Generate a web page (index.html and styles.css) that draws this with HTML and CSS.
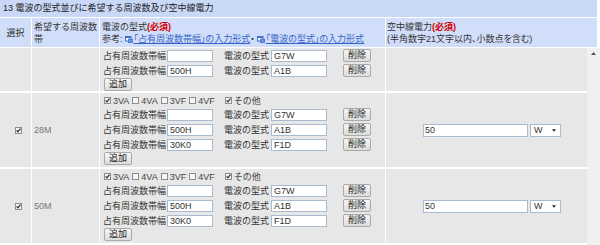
FILE: index.html
```html
<!DOCTYPE html>
<html lang="ja">
<head>
<meta charset="utf-8">
<link rel="stylesheet" href="styles.css">
</head>
<body>
<svg class="defs" width="0" height="0" aria-hidden="true">
  <symbol id="cbon" viewBox="0 0 7 7">
    <rect x="0.5" y="0.5" width="6" height="6" fill="#f6f6f6" stroke="#8d8d8d"/>
    <path d="M1.6 3.4 L2.9 4.9 L5.5 1.7" fill="none" stroke="#2a2a2a" stroke-width="1.2"/>
  </symbol>
  <symbol id="cboff" viewBox="0 0 7 7">
    <rect x="0.5" y="0.5" width="6" height="6" fill="#f6f6f6" stroke="#8d8d8d"/>
  </symbol>
  <symbol id="win" viewBox="0 0 8 7">
    <rect x="0.5" y="0.5" width="5.5" height="4.5" fill="#fff" stroke="#3f6fcf"/>
    <rect x="0.5" y="0.5" width="5.5" height="1.5" fill="#3f6fcf"/>
    <rect x="3.5" y="3" width="4" height="3.5" fill="#6b93df" stroke="#3f6fcf" stroke-width="0.8"/>
  </symbol>
</svg>
<div class="page">
  <div class="title">13 電波の型式並びに希望する周波数及び空中線電力</div>

  <div class="grid hdr">
    <div class="cell c1">選択</div>
    <div class="cell c2">希望する周波数帯</div>
    <div class="cell c3">
      <div>電波の型式<span class="req">(必須)</span></div>
      <div class="refs">参考:<a class="lnk"><svg class="wic"><use href="#win"/></svg>「占有周波数帯幅」の入力形式</a>・<a class="lnk"><svg class="wic"><use href="#win"/></svg>「電波の型式」の入力形式</a></div>
    </div>
    <div class="cell c4">
      <div>空中線電力<span class="req">(必須)</span></div>
      <div class="note">(半角数字21文字以内、小数点を含む)</div>
    </div>
  </div>

  <div class="body">
    <div class="grid rows">
      <!-- row 1 -->
      <div class="cell d1"></div>
      <div class="cell d2"></div>
      <div class="cell d3 first">
        <div class="pair"><span class="lbl">占有周波数帯幅</span><input class="inp w1" type="text" value=""><span class="lbl lbl2">電波の型式</span><input class="inp w2" type="text" value="G7W"><button class="btn del">削除</button></div>
        <div class="pair"><span class="lbl">占有周波数帯幅</span><input class="inp w1" type="text" value="500H"><span class="lbl lbl2">電波の型式</span><input class="inp w2" type="text" value="A1B"><button class="btn del">削除</button></div>
        <div class="addl"><button class="btn">追加</button></div>
      </div>
      <div class="cell d4"></div>

      <!-- row 2 -->
      <div class="cell d1"><svg class="cb"><use href="#cbon"/></svg></div>
      <div class="cell d2">28M</div>
      <div class="cell d3">
        <div class="chks">
          <span class="ck"><svg class="cb"><use href="#cbon"/></svg>3VA</span>
          <span class="ck"><svg class="cb"><use href="#cboff"/></svg>4VA</span>
          <span class="ck"><svg class="cb"><use href="#cboff"/></svg>3VF</span>
          <span class="ck"><svg class="cb"><use href="#cboff"/></svg>4VF</span>
          <span class="ck other"><svg class="cb"><use href="#cbon"/></svg>その他</span>
        </div>
        <div class="pair"><span class="lbl">占有周波数帯幅</span><input class="inp w1" type="text" value=""><span class="lbl lbl2">電波の型式</span><input class="inp w2" type="text" value="G7W"><button class="btn del">削除</button></div>
        <div class="pair"><span class="lbl">占有周波数帯幅</span><input class="inp w1" type="text" value="500H"><span class="lbl lbl2">電波の型式</span><input class="inp w2" type="text" value="A1B"><button class="btn del">削除</button></div>
        <div class="pair"><span class="lbl">占有周波数帯幅</span><input class="inp w1" type="text" value="30K0"><span class="lbl lbl2">電波の型式</span><input class="inp w2" type="text" value="F1D"><button class="btn del">削除</button></div>
        <div class="addl"><button class="btn">追加</button></div>
      </div>
      <div class="cell d4">
        <input class="inp pw" type="text" value="50"><span class="sel">W<svg class="arr" viewBox="0 0 5 3"><path d="M0 0H5L2.5 3Z" fill="#222"/></svg></span>
      </div>

      <!-- row 3 -->
      <div class="cell d1"><svg class="cb"><use href="#cbon"/></svg></div>
      <div class="cell d2">50M</div>
      <div class="cell d3">
        <div class="chks">
          <span class="ck"><svg class="cb"><use href="#cbon"/></svg>3VA</span>
          <span class="ck"><svg class="cb"><use href="#cboff"/></svg>4VA</span>
          <span class="ck"><svg class="cb"><use href="#cboff"/></svg>3VF</span>
          <span class="ck"><svg class="cb"><use href="#cboff"/></svg>4VF</span>
          <span class="ck other"><svg class="cb"><use href="#cbon"/></svg>その他</span>
        </div>
        <div class="pair"><span class="lbl">占有周波数帯幅</span><input class="inp w1" type="text" value=""><span class="lbl lbl2">電波の型式</span><input class="inp w2" type="text" value="G7W"><button class="btn del">削除</button></div>
        <div class="pair"><span class="lbl">占有周波数帯幅</span><input class="inp w1" type="text" value="500H"><span class="lbl lbl2">電波の型式</span><input class="inp w2" type="text" value="A1B"><button class="btn del">削除</button></div>
        <div class="pair"><span class="lbl">占有周波数帯幅</span><input class="inp w1" type="text" value="30K0"><span class="lbl lbl2">電波の型式</span><input class="inp w2" type="text" value="F1D"><button class="btn del">削除</button></div>
        <div class="addl"><button class="btn">追加</button></div>
      </div>
      <div class="cell d4">
        <input class="inp pw" type="text" value="50"><span class="sel">W<svg class="arr" viewBox="0 0 5 3"><path d="M0 0H5L2.5 3Z" fill="#222"/></svg></span>
      </div>
    </div>
    <div class="sbar"><svg class="up" viewBox="0 0 5 3"><path d="M0 3H5L2.5 0Z" fill="#555"/></svg></div>
  </div>
</div>
</body>
</html>
```

FILE: styles.css
```css
* { box-sizing: border-box; }
html, body { margin: 0; padding: 0; background: #fff; }
body {
  font-family: "Liberation Sans", "Noto Sans CJK JP", sans-serif;
  font-size: 9px;
  color: #333;
  width: 600px;
  height: 245px;
  overflow: hidden;
}
.defs { position: absolute; width: 0; height: 0; }
.page { width: 600px; }

.title {
  width: 597px;
  height: 18px;
  line-height: 17px;
  padding-left: 3px;
  background: #c9d8f6;
  border-bottom: 1px solid #fff;
  color: #222;
}

.grid {
  display: grid;
  grid-template-columns: 31px 67px 285px 1fr;
  column-gap: 1px;
  background: #fff;
}

.hdr { width: 597px; height: 30px; border-bottom: 1px solid #fff; }
.hdr .cell {
  background: #d1def9;
  padding: 3px 2px 2px;
  line-height: 12px;
  color: #333;
}
.hdr .c1 { display: flex; align-items: center; justify-content: center; padding: 0; }
.hdr .c4 { padding-left: 1px; }
.req { color: #d40000; font-weight: bold; }
.refs { white-space: nowrap; font-feature-settings: "palt"; }
.note { white-space: nowrap; font-feature-settings: "palt"; }
.lnk { color: #3565c9; text-decoration: underline; }
.wic { width: 8px; height: 7px; vertical-align: -1px; margin-left: 2px; margin-right: 1px; }

.body { display: flex; height: 197px; overflow: hidden; }
.rows { width: 587px; row-gap: 2px; align-content: start; }
.rows .cell { background: #e7e7e7; }
.sbar { flex: 1; background: #f0f0f0; display: flex; justify-content: center; align-items: flex-start; padding-top: 4px; }
.up { width: 5px; height: 3px; }

.d1 { display: flex; align-items: center; justify-content: center; padding-left: 6px; }
.d2 { display: flex; align-items: center; padding-left: 2px; color: #777; }
.d3 { padding: 1px 2px 2px; }
.d3.first { padding: 0 2px; }
.d4 { display: flex; align-items: center; padding-left: 37px; }

.cb { width: 7px; height: 7px; flex: none; }

.chks { height: 13px; display: flex; align-items: center; padding-left: 2px; color: #444; }
.ck { display: inline-flex; align-items: center; margin-right: 3px; }
.ck .cb { margin-right: 2px; }
.ck.other { margin-left: 7px; }

.pair { height: 15px; display: flex; align-items: center; }
.lbl { color: #333; padding-left: 1px; }
.lbl2 { margin-left: 10px; margin-right: 2px; }
.inp {
  height: 12px;
  margin: 0;
  padding: 0 2px;
  border: 1px solid #a9bbcf;
  background: #fff;
  font-family: "Liberation Sans", "Noto Sans CJK JP", sans-serif;
  font-size: 9px;
  color: #333;
  outline: none;
  border-radius: 0;
}
.w1 { width: 46px; margin-left: 1px; }
.w2 { width: 56px; }
.pw { width: 105px; height: 13px; padding-left: 1px; }

.btn {
  height: 13px;
  margin: 0;
  padding: 0 4px;
  border: 1px solid #aaaaaa;
  border-radius: 2px;
  background: linear-gradient(#f6f6f6, #dcdcdc);
  font-family: "Liberation Sans", "Noto Sans CJK JP", sans-serif;
  font-size: 9px;
  line-height: 11px;
  color: #222;
}
.del { margin-left: 16px; }
.addl { height: 13px; display: flex; align-items: center; padding-left: 2px; }

.sel {
  width: 31px;
  height: 13px;
  margin-left: 2px;
  border: 1px solid #a9bbcf;
  background: #fff;
  display: inline-flex;
  align-items: center;
  justify-content: space-between;
  padding: 0 4px 0 3px;
  color: #333;
}
.arr { width: 4px; height: 3px; }
```
